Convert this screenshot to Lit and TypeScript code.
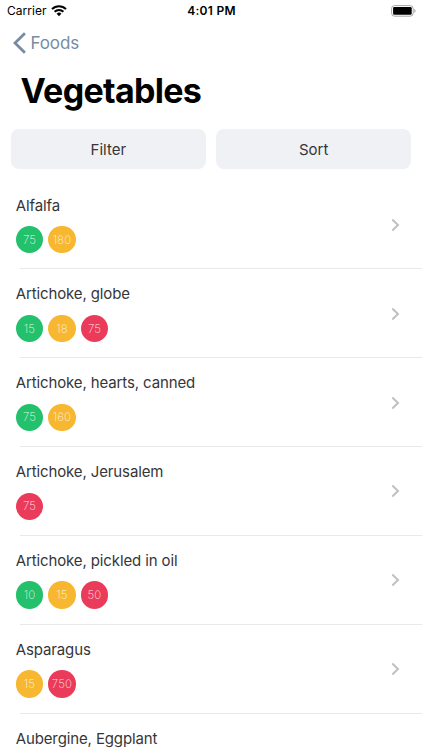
import { LitElement, html, css } from 'lit';
import { customElement, property } from 'lit/decorators.js';

type Level = 'green' | 'amber' | 'red';

interface Serving {
  level: Level;
  amount: number;
}

interface Food {
  name: string;
  servings: Serving[];
}

const FOODS: Food[] = [
  { name: 'Alfalfa', servings: [{ level: 'green', amount: 75 }, { level: 'amber', amount: 180 }] },
  {
    name: 'Artichoke, globe',
    servings: [
      { level: 'green', amount: 15 },
      { level: 'amber', amount: 18 },
      { level: 'red', amount: 75 },
    ],
  },
  {
    name: 'Artichoke, hearts, canned',
    servings: [{ level: 'green', amount: 75 }, { level: 'amber', amount: 160 }],
  },
  { name: 'Artichoke, Jerusalem', servings: [{ level: 'red', amount: 75 }] },
  {
    name: 'Artichoke, pickled in oil',
    servings: [
      { level: 'green', amount: 10 },
      { level: 'amber', amount: 15 },
      { level: 'red', amount: 50 },
    ],
  },
  { name: 'Asparagus', servings: [{ level: 'amber', amount: 15 }, { level: 'red', amount: 750 }] },
  { name: 'Aubergine, Eggplant', servings: [] },
];

@customElement('status-bar')
export class StatusBar extends LitElement {
  static styles = css`
    :host {
      display: grid;
      flex: none;
      grid-template-columns: 1fr auto 1fr;
      align-items: center;
      height: 21px;
      padding: 0 6px 0 7px;
      color: #000;
      font-size: 12px;
    }

    .carrier {
      display: flex;
      align-items: center;
      gap: 4px;
      letter-spacing: 0.05px;
    }

    .time {
      font-weight: 600;
      letter-spacing: 0.28px;
    }

    .battery {
      justify-self: end;
    }

    svg {
      display: block;
    }
  `;

  render() {
    return html`
      <div class="carrier">
        <span>Carrier</span>
        <svg width="16" height="12" viewBox="0 0 16 12">
          <g fill="none" stroke="#000" stroke-width="2">
            <path d="M1 4.1a10 10 0 0 1 14 0" />
            <path d="M3.6 6.8a6.2 6.2 0 0 1 8.8 0" />
          </g>
          <path d="M8 11.2 5.6 8.7a3.4 3.4 0 0 1 4.8 0z" />
        </svg>
      </div>
      <span class="time">4:01 PM</span>
      <svg class="battery" width="25" height="12" viewBox="0 0 25 12">
        <rect x="0.6" y="0.6" width="21.6" height="10.6" rx="3" fill="none" stroke="#a6a6a6" />
        <rect x="2.1" y="2.1" width="18.6" height="7.6" rx="1.2" />
        <path d="M23.4 4.1v3.6c.7-.3 1.1-1 1.1-1.8s-.4-1.5-1.1-1.8z" fill="#999" />
      </svg>
    `;
  }
}

@customElement('food-row')
export class FoodRow extends LitElement {
  static styles = css`
    :host {
      display: flex;
      box-sizing: border-box;
      flex: none;
      align-items: center;
      height: 88.9px;
      padding: 0 22px 0 15.7px;
      background: linear-gradient(#e9e9eb, #e9e9eb) 20px 100% / 100% 1px no-repeat;
    }

    .info {
      flex: 1;
      height: 58.4px;
    }

    .name {
      height: 19px;
      color: #363638;
      font-size: 15px;
      line-height: 19px;
      letter-spacing: -0.12px;
      white-space: nowrap;
    }

    .servings {
      display: flex;
      gap: 5px;
      margin-top: 11.4px;
    }

    .serving {
      display: flex;
      align-items: center;
      justify-content: center;
      width: 27.5px;
      height: 27.5px;
      border-radius: 50%;
      color: rgba(255, 255, 255, 0.85);
      font-size: 11.5px;
      font-weight: 200;
      letter-spacing: 0.1px;
    }

    .green {
      background: #23c16b;
    }

    .amber {
      background: #f7b731;
    }

    .red {
      background: #eb3b5a;
    }
  `;

  @property({ attribute: false })
  food!: Food;

  render() {
    return html`
      <div class="info">
        <div class="name">${this.food.name}</div>
        <div class="servings">
          ${this.food.servings.map(
            (serving) => html`<span class="serving ${serving.level}">${serving.amount}</span>`
          )}
        </div>
      </div>
      <svg width="9" height="14" viewBox="0 0 9 14">
        <path d="M1.3 1.5 7 7l-5.7 5.5" fill="none" stroke="#c0c0c2" stroke-width="2" />
      </svg>
    `;
  }
}

@customElement('app-root')
export class AppRoot extends LitElement {
  static styles = css`
    :host {
      display: flex;
      flex-direction: column;
      height: 100vh;
      overflow: hidden;
      background: #fff;
      font-family: Inter, 'Liberation Sans', sans-serif;
    }

    .back {
      display: flex;
      flex: none;
      align-items: center;
      gap: 4.5px;
      height: 44px;
      padding: 0 0 1px 13px;
      color: #778ca3;
      font-size: 17px;
      letter-spacing: -0.1px;
    }

    h1 {
      flex: none;
      margin: 0;
      padding-left: 20.5px;
      color: #000;
      font-size: 34px;
      font-weight: 700;
      line-height: 50px;
      letter-spacing: -0.7px;
    }

    .actions {
      display: grid;
      flex: none;
      grid-template-columns: 1fr 1fr;
      gap: 10px;
      padding: 12.6px 10.7px 11.2px;
    }

    button {
      height: 40.5px;
      padding: 1px 0 0;
      border: none;
      border-radius: 8px;
      background: #f0f1f5;
      color: #363638;
      font: inherit;
      font-size: 15px;
      letter-spacing: 0;
    }
  `;

  render() {
    return html`
      <status-bar></status-bar>
      <div class="back">
        <svg width="13" height="22" viewBox="0 0 13 22">
          <path d="M11.9 1.2 2 11l9.9 9.8" fill="none" stroke="currentColor" stroke-width="2.8" />
        </svg>
        <span>Foods</span>
      </div>
      <h1>Vegetables</h1>
      <div class="actions">
        <button>Filter</button>
        <button>Sort</button>
      </div>
      ${FOODS.map((food) => html`<food-row .food=${food}></food-row>`)}
    `;
  }
}
